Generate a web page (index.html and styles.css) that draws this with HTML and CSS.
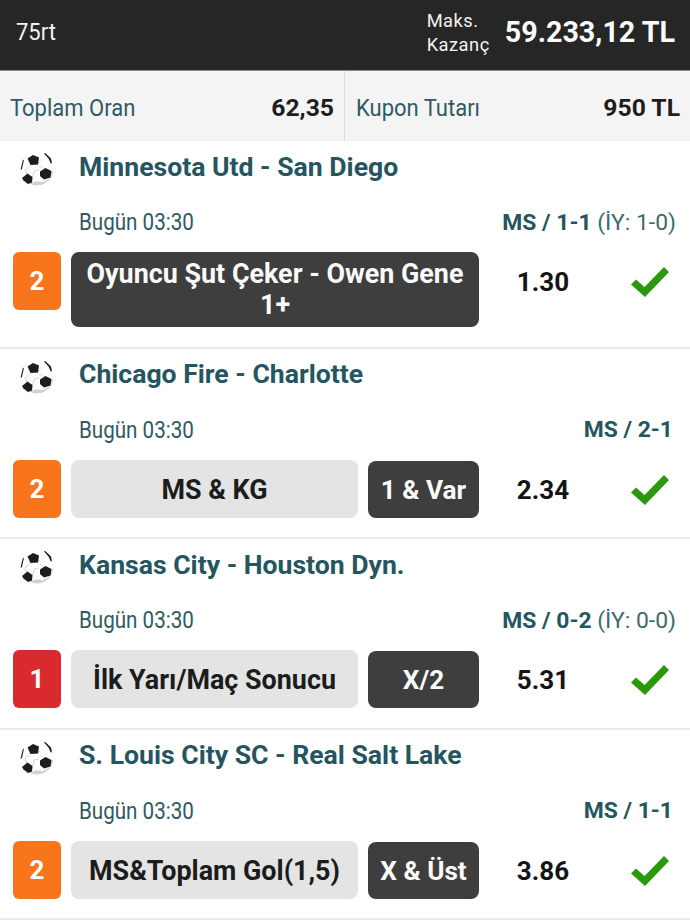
FILE: index.html
```html
<!DOCTYPE html>
<html>
  <head>
    <title>Kupon</title>
    <meta http-equiv="Content-Type" content="text/html; charset=utf-8" />
    <meta name="viewport" content="width=device-width" />
    <link rel="stylesheet" href="styles.css">
  </head>
  <body>
    <svg class="defs" width="0" height="0">
      <defs>
        <symbol id="ball" viewBox="0 0 36 36">
          <circle cx="18" cy="18" r="16.5" fill="#fff"/>
          <path d="M34.500 18a16.500 16.500 0 0 1-24 14.700l5-2 8 .5 7-4z" fill="#d2d2d2"/>
          <path d="M18 14l3-3M11 14l-5 5 2 5M20 19l-5 1-1 6M21 15l4 3M16 31l6 0" stroke="#c4c4c4" stroke-width=".7" fill="none"/>
          <path d="M8.500 7.500l5.500-3.500 6 2.500-1 7-7.500 .5z" fill="#1d1d1d"/>
          <path d="M21 20.500l5.500-3.500 6 3-1 6.500-6.500 2-4-3.500z" fill="#1d1d1d"/>
          <path d="M3 27l5.500-4.500 5 3.500-.5 5.500-4 1.500-4.500-3.500z" fill="#1d1d1d"/>
          <path d="M3.700 9.500l1.300-1-2 9.500-1.500 1z" fill="#1d1d1d"/>
          <path d="M25 2.500l1.200-.5 5.800 5.500 1 5-1.500-.5-2-4.500z" fill="#1d1d1d"/>
        </symbol>
        <symbol id="check" viewBox="0 0 38 30">
          <path d="M0 17.500l5-5 8.500 7.500 19.500-20 5 5-24 25z" fill="#2a9a0c"/>
        </symbol>
      </defs>
    </svg>

    <div class="top">
      <span class="top_name">75rt</span>
      <span class="top_label">Maks.<br>Kazanç</span>
      <span class="top_amount">59.233,12 TL</span>
    </div>

    <div class="summary">
      <div class="summary_cell summary_left">
        <span class="summary_label">Toplam Oran</span>
        <span class="summary_value">62,35</span>
      </div>
      <div class="summary_cell summary_right">
        <span class="summary_label">Kupon Tutarı</span>
        <span class="summary_value">950 TL</span>
      </div>
    </div>

    <div class="match">
      <div class="match_title">
        <svg class="ball"><use href="#ball"/></svg>
        <span>Minnesota Utd - San Diego</span>
      </div>
      <div class="match_info">
        <span class="date">Bugün 03:30</span>
        <span class="score"><b>MS / 1-1</b> (İY: 1-0)</span>
      </div>
      <div class="bet">
        <span class="pick orange">2</span>
        <span class="market dark wide">Oyuncu Şut Çeker - Owen Gene 1+</span>
        <span class="odd">1.30</span>
        <svg class="check"><use href="#check"/></svg>
      </div>
    </div>

    <div class="match">
      <div class="match_title">
        <svg class="ball"><use href="#ball"/></svg>
        <span>Chicago Fire - Charlotte</span>
      </div>
      <div class="match_info">
        <span class="date">Bugün 03:30</span>
        <span class="score score_short"><b>MS / 2-1</b></span>
      </div>
      <div class="bet">
        <span class="pick orange">2</span>
        <span class="market">MS &amp; KG</span>
        <span class="choice">1 &amp; Var</span>
        <span class="odd">2.34</span>
        <svg class="check"><use href="#check"/></svg>
      </div>
    </div>

    <div class="match">
      <div class="match_title">
        <svg class="ball"><use href="#ball"/></svg>
        <span>Kansas City - Houston Dyn.</span>
      </div>
      <div class="match_info">
        <span class="date">Bugün 03:30</span>
        <span class="score"><b>MS / 0-2</b> (İY: 0-0)</span>
      </div>
      <div class="bet">
        <span class="pick red">1</span>
        <span class="market">İlk Yarı/Maç Sonucu</span>
        <span class="choice">X/2</span>
        <span class="odd">5.31</span>
        <svg class="check"><use href="#check"/></svg>
      </div>
    </div>

    <div class="match">
      <div class="match_title">
        <svg class="ball"><use href="#ball"/></svg>
        <span>S. Louis City SC - Real Salt Lake</span>
      </div>
      <div class="match_info">
        <span class="date">Bugün 03:30</span>
        <span class="score score_short"><b>MS / 1-1</b></span>
      </div>
      <div class="bet">
        <span class="pick orange">2</span>
        <span class="market">MS&amp;Toplam Gol(1,5)</span>
        <span class="choice">X &amp; Üst</span>
        <span class="odd">3.86</span>
        <svg class="check"><use href="#check"/></svg>
      </div>
    </div>
  </body>
</html>
```

FILE: styles.css
```css
body {
    font-family: Roboto, sans-serif;
    margin: 0;
    padding: 0;
    background: #fff;
    overflow: hidden;
}

.defs {
    display: block;
    height: 0;
}

.top {
    display: flex;
    align-items: center;
    height: 70px;
    box-sizing: content-box;
    padding: 0 15px 0 16px;
    background: #262626;
    color: #f2f2f2;
    border-bottom: 1px solid #8c8c8c;
}
.top_name {
    flex: 1;
    font-size: 22px;
    transform: scaleY(1.06);
    margin-bottom: 6px;
}
.top_label {
    font-size: 18.300px;
    line-height: 24px;
    letter-spacing: 0.5px;
    margin: 0 15px 4px 0;
}
.top_amount {
    font-size: 28.700px;
    font-weight: 700;
    color: #fafafa;
    margin-bottom: 6px;
}

.summary {
    display: flex;
    height: 70px;
    background: #f4f4f4;
}
.summary_cell {
    display: flex;
    align-items: center;
    justify-content: space-between;
    box-sizing: border-box;
    padding-top: 2px;
}
.summary_left {
    width: 345px;
    padding-left: 10px;
    padding-right: 10px;
    border-right: 1px solid #dcdcdc;
}
.summary_right {
    flex: 1;
    padding-left: 11px;
    padding-right: 10px;
}
.summary_label {
    display: inline-block;
    font-size: 22px;
    color: #2f5a63;
    transform: scaleY(1.1);
}
.summary_value {
    font-size: 24.700px;
    font-weight: 700;
    color: #1e1e1e;
}

.match {
    padding-bottom: 19.500px;
    border-bottom: 2px solid #e4eced;
}
.match_title {
    display: flex;
    align-items: center;
    height: 50px;
    padding-left: 19px;
    font-size: 26.600px;
    font-weight: 700;
    color: #245560;
}
.ball {
    width: 36px;
    height: 36px;
    margin-right: 24px;
    margin-top: 6px;
    flex: none;
}
.match_info {
    display: flex;
    justify-content: space-between;
    align-items: center;
    height: 30px;
    margin-top: 16px;
    padding: 0 14px 0 79px;
    color: #2f5a63;
}
.date {
    display: inline-block;
    font-size: 20.600px;
    transform: scaleY(1.13);
}
.score {
    font-size: 22.900px;
    color: #3c6a72;
}
.score b {
    font-weight: 700;
    color: #245560;
}
.score_short {
    padding-right: 3px;
}

.bet {
    display: flex;
    align-items: flex-start;
    margin-top: 15px;
    padding: 0 13px;
}
.pick {
    display: flex;
    align-items: center;
    justify-content: center;
    flex: none;
    width: 48px;
    height: 58px;
    margin-right: 10px;
    border-radius: 6px;
    color: #fff;
    font-size: 26px;
    font-weight: 700;
}
.orange {
    background: #f9751b;
}
.red {
    background: #d92a2f;
}
.market {
    display: flex;
    align-items: center;
    justify-content: center;
    box-sizing: border-box;
    flex: none;
    width: 287px;
    height: 58px;
    padding-top: 3px;
    border-radius: 8px;
    background: #e4e4e4;
    color: #1c1c1c;
    font-size: 26.900px;
    font-weight: 700;
    line-height: 31px;
    text-align: center;
}
.market.dark {
    background: #3e3e3e;
    color: #fafafa;
}
.market.wide {
    width: 408px;
    height: 75px;
    padding: 1px 12px 0;
}
.choice {
    display: flex;
    align-items: center;
    justify-content: center;
    box-sizing: border-box;
    flex: none;
    width: 111px;
    height: 57px;
    margin: 1px 0 0 10px;
    padding-top: 1px;
    border-radius: 8px;
    background: #3e3e3e;
    color: #fafafa;
    font-size: 26.200px;
    font-weight: 700;
}
.odd {
    flex: none;
    width: 128px;
    height: 58px;
    line-height: 60px;
    text-align: center;
    font-size: 26px;
    font-weight: 700;
    color: #141414;
}
.check {
    flex: none;
    width: 38px;
    height: 30px;
    margin: 15px 0 0 24px;
}
```
